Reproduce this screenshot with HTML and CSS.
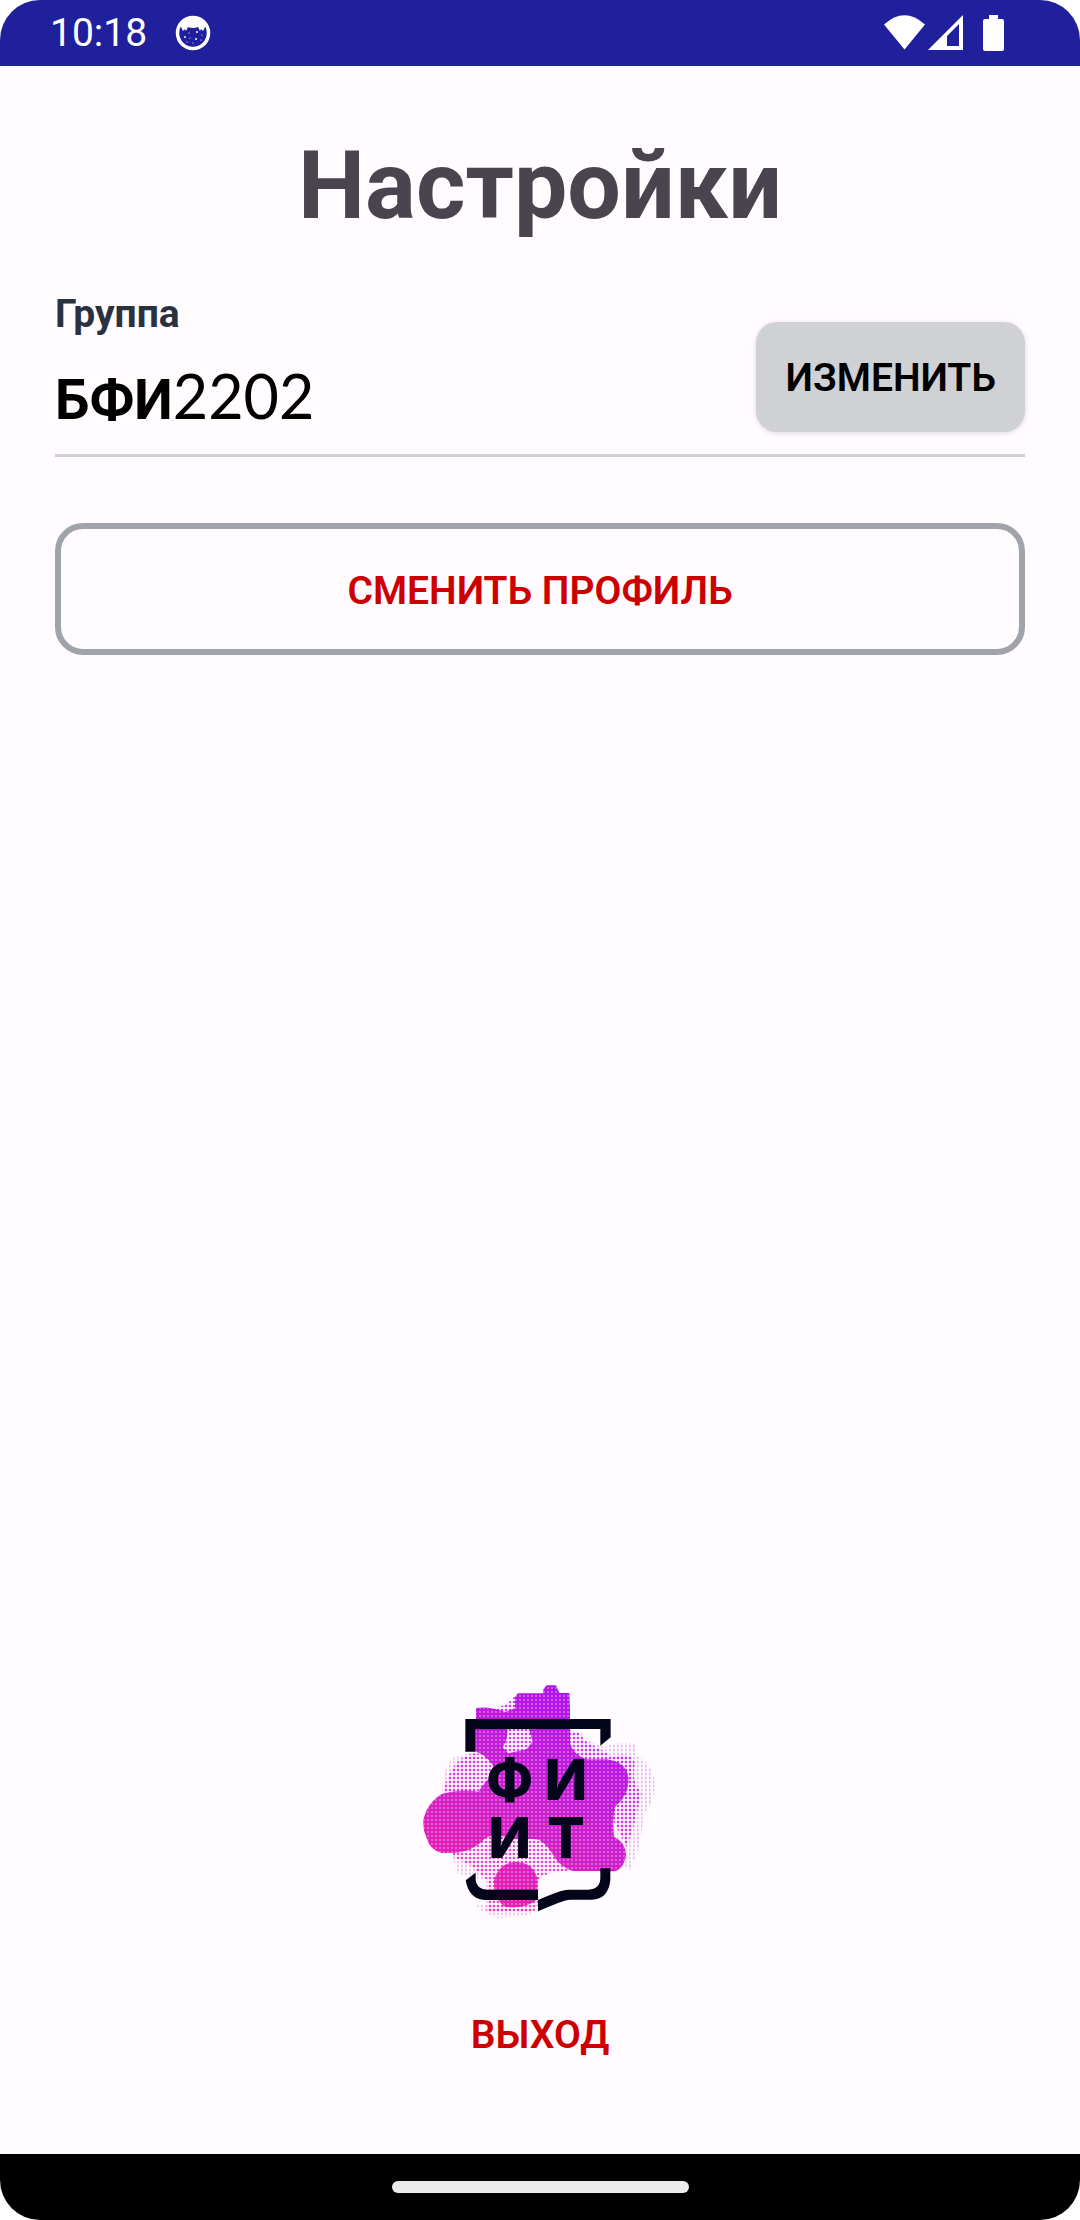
FILE: index.html
```html
<!DOCTYPE html>
<html lang="ru">
<head>
<meta charset="utf-8">
<meta name="viewport" content="width=device-width, initial-scale=1">
<title>Настройки</title>
<link rel="stylesheet" href="styles.css">
</head>
<body>
<div class="screen">
  <header class="status-bar">
    <time class="clock">10:18</time>
    <svg class="cat" viewBox="0 0 36 36" aria-hidden="true">
      <circle cx="18" cy="18" r="15.500" fill="none" stroke="#fff" stroke-width="3.500"/>
      <path d="M5 10Q10 2 18 2T31 10L28 16L26 14L25 16L23 12Q18 14 13 12L11 16L10 14L8 16Z" fill="#fff"/>
      <g fill="#fff"><circle cx="10" cy="22" r=".9"/><circle cx="14" cy="18" r=".6"/><circle cx="22" cy="17" r="1"/><circle cx="27" cy="20" r=".6"/><circle cx="21" cy="24" r="1"/><circle cx="15" cy="23" r=".6"/><circle cx="26" cy="25" r=".6"/><circle cx="12" cy="27" r=".6"/><circle cx="18" cy="28" r=".6"/></g>
    </svg>
    <svg class="signals" viewBox="0 0 120 36" aria-hidden="true">
      <g fill="#fff">
        <path d="M0 9.500Q20.500-9 41 9.500L20.500 34.500Z"/>
        <path fill-rule="evenodd" d="M44 35L79 0V35ZM63 31H75V9L63 21Z"/>
        <path d="M105 0h9v4h4q2 0 2 2v28q0 2-2 2h-17q-2 0-2-2V6q0-2 2-2h4z"/>
      </g>
    </svg>
  </header>

  <main class="settings">
    <h1 class="title">Настройки</h1>
    <section class="group-row">
      <div class="group">
        <h2 class="group-label">Группа</h2>
        <p class="group-value"><b class="group-code">БФИ</b>2202</p>
      </div>
      <button class="btn btn-change" type="button">ИЗМЕНИТЬ</button>
    </section>
    <button class="btn btn-profile" type="button">СМЕНИТЬ ПРОФИЛЬ</button>

    <div class="bottom">
      <svg class="logo" viewBox="0 0 840 840" role="img" aria-label="ФИИТ">
        <defs>
          <linearGradient id="ink" gradientUnits="userSpaceOnUse" x1="560" y1="120" x2="240" y2="700">
            <stop offset="0" stop-color="#b012ee"/>
            <stop offset=".5" stop-color="#c81fd0"/>
            <stop offset="1" stop-color="#e81fb0"/>
          </linearGradient>
          <pattern id="dots" width="12" height="12" patternUnits="userSpaceOnUse"><rect x="2" y="2" width="8" height="8" rx="3" fill="#fff"/></pattern>
          <pattern id="fine" width="12" height="12" patternUnits="userSpaceOnUse"><rect x="3" y="2" width="5" height="8" fill="#fff"/></pattern>
          <pattern id="holes" width="12" height="12" patternUnits="userSpaceOnUse"><circle cx="0" cy="0" r="2.500" fill="#f3b4f3"/><circle cx="12" cy="0" r="2.500" fill="#f3b4f3"/><circle cx="0" cy="12" r="2.500" fill="#f3b4f3"/><circle cx="12" cy="12" r="2.500" fill="#f3b4f3"/></pattern>
          <mask id="dot-mask"><rect width="840" height="840" fill="url(#dots)"/></mask>
          <mask id="fine-mask"><rect width="840" height="840" fill="url(#fine)"/></mask>
          <path id="blob" fill-rule="evenodd" d="M228 144Q270 138 315 156L345 145V112L355 100H430V88L440 76H468L478 99H508L510 150V250Q520 285 560 298H620Q683 306 686 360Q684 410 645 440Q636 480 642 530Q678 548 678 585Q670 632 640 634H520Q478 620 455 578Q430 535 400 537H330Q290 515 255 535Q220 575 160 579H125Q90 570 80 535Q66 505 71 475Q85 425 125 402Q180 385 235 395L285 330Q270 290 228 275ZM322 200H385L398 245L380 268L325 280L308 262Q325 235 322 200Z"/>
          <path id="spot" d="M282 660Q300 606 350 606Q398 608 412 655V718Q370 752 310 738Q280 710 282 660Z"/>
        </defs>
        <g fill="url(#ink)">
          <path mask="url(#fine-mask)" opacity=".3" d="M125 395Q125 320 165 290L230 275L225 400ZM530 210L610 260Q680 240 712 255L706 285Q760 310 764 375Q762 430 735 455L718 560L690 630L630 590V280L550 290ZM155 580L250 610V660L170 640ZM230 735L420 745L385 765L290 775L240 750Z"/>
          <path mask="url(#dot-mask)" opacity=".8" d="M285 145Q330 135 350 100L510 170V210Q548 215 550 240L640 290Q690 270 705 310Q690 360 725 400L700 500L680 560L640 480L470 600L510 634Q450 630 415 660V735L400 755H260V660L210 615L160 590L130 395Q155 290 225 280L290 290Z"/>
          <use href="#blob"/>
          <use href="#spot"/>
        </g>
        <use href="#blob" fill="url(#holes)"/>
        <use href="#spot" fill="url(#holes)"/>
        <g fill="#fffbff">
          <path d="M415 660Q440 632 500 634H601V660Q600 688 565 688Q490 690 415 720Z"/>
          <path d="M550 207H602V255L565 242Q550 240 546 222Z"/>
        </g>
        <g fill="#03051a">
          <path d="M196 177H632V232L601 257V207H227V275H196Z"/>
          <path d="M197 661L227 638V660Q230 688 262 689H414V720H255Q207 718 197 661Z"/>
          <path d="M601 625H631V660Q625 718 575 719H510Q490 720 414 754V720Q480 690 505 689H565Q600 688 601 655Z"/>
        </g>
        <g class="logo-letters" text-anchor="middle">
          <text x="329" y="421">Ф</text>
          <text x="498" y="421">И</text>
          <text x="329" y="593">И</text>
          <text x="498" y="593">Т</text>
        </g>
      </svg>
      <button class="btn btn-exit" type="button">ВЫХОД</button>
    </div>
  </main>

  <footer class="nav-bar"><div class="home-handle"></div></footer>
</div>
</body>
</html>
```
FILE: styles.css
```css
* {
  box-sizing: border-box;
}

body {
  margin: 0;
  background: #fff;
  font-family: Roboto, "Liberation Sans", sans-serif;
}

.screen {
  display: flex;
  flex-direction: column;
  min-height: 100vh;
  overflow: hidden;
  border-radius: 40px;
  background: #fffbff;
}

.status-bar {
  display: flex;
  align-items: center;
  height: 66px;
  padding: 0 76px 0 50px;
  background: #20209c;
  color: #fff;
}

.clock {
  font-size: 39px;
  line-height: 48px;
}

.cat {
  width: 36px;
  height: 36px;
  margin-left: 28px;
}

.signals {
  width: 120px;
  height: 36px;
  margin-left: auto;
}

.settings {
  display: flex;
  flex: 1;
  flex-direction: column;
  padding: 64px 55px 72px;
}

.title {
  margin: 0 0 48px;
  color: #49454f;
  font-size: 95px;
  font-weight: 700;
  line-height: 112px;
  text-align: center;
}

.group-row {
  display: flex;
  align-items: flex-end;
  justify-content: space-between;
  padding-bottom: 22px;
  border-bottom: 3px solid #ced2d3;
}

.group-label {
  margin: 0 0 22px;
  color: #2a3240;
  font-size: 39px;
  font-weight: 700;
  line-height: 48px;
}

.group-value {
  margin: 0;
  color: #000;
  font-family: Lato, "Noto Sans", sans-serif;
  font-size: 61px;
  line-height: 72px;
}

.group-code {
  font-family: Roboto, sans-serif;
  font-size: 55px;
  font-weight: 700;
  line-height: 1px;
}

.btn {
  border: 0;
  background: transparent;
  color: #c00;
  font-family: inherit;
  font-size: 39px;
  font-weight: 600;
  line-height: 48px;
  cursor: pointer;
}

.btn-change {
  padding: 32px 29px 30px;
  border-radius: 21px;
  background: #d0d1d5;
  box-shadow: 0 1px 5px rgba(0, 0, 0, 0.15);
  color: #000;
}

.btn-profile {
  margin-top: 66px;
  padding: 38px 36px 34px;
  border: 6px solid #a0a3a9;
  border-radius: 28px;
}

.bottom {
  display: flex;
  flex-direction: column;
  align-items: center;
  margin-top: auto;
}

.logo {
  width: 280px;
  height: 280px;
}

.logo-letters {
  fill: #03051a;
  font-family: Inter, sans-serif;
  font-size: 168px;
  font-weight: 800;
}

.btn-exit {
  margin-top: 46px;
  padding: 25px 40px 23px;
}

.nav-bar {
  display: flex;
  align-items: center;
  justify-content: center;
  height: 66px;
  background: #000;
}

.home-handle {
  width: 297px;
  height: 12px;
  border-radius: 6px;
  background: #ebebeb;
}
```
